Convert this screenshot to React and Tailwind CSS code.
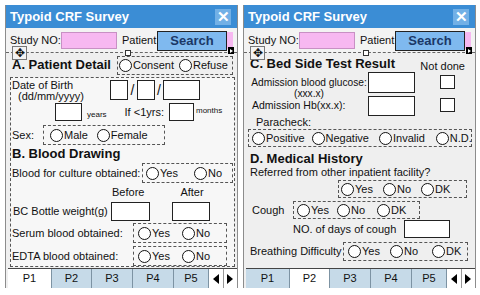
import React from 'react';

const Radio = ({ label, className = '' }) => (
    <span className={`flex items-center ${className}`}>
        <span className="w-[13px] h-[13px] rounded-full border border-[#111] bg-white shrink-0" />
        <span className="ml-[1px]">{label}</span>
    </span>
);

const Group = ({ className = '', children }) => (
    <div className={`flex items-center border border-dashed border-[#555] ${className}`}>{children}</div>
);

const Box = ({ className = '' }) => <div className={`border border-[#222] bg-white shrink-0 ${className}`} />;

const LeftContent = () => (
    <div className="flex flex-col h-full">
        <div className="flex items-center h-[24px]">
            <span className="ml-[6px] text-[13px] font-bold">A. Patient Detail</span>
            <Group className="ml-auto mr-[4px] w-[116px] h-[19px] pl-[1px] gap-[5px]">
                <Radio label="Consent" />
                <Radio label="Refuse" />
            </Group>
        </div>
        <div className="ml-[4px] mr-[2px] mb-[1px] flex-1 border border-dashed border-[#555] bg-[#f7f7f7] flex flex-col">
            <div className="flex mt-[2px] h-[20px]">
                <div className="w-[99px] leading-[11px] pl-[1px]">
                    <div>Date of Birth</div>
                    <div className="pl-[6px]">(dd/mm/yyyy)</div>
                </div>
                <Box className="w-[18px] h-[20px]" />
                <span className="w-[9px] text-center text-[14px] leading-[20px]">/</span>
                <Box className="w-[18px] h-[20px]" />
                <span className="w-[8px] text-center text-[14px] leading-[20px]">/</span>
                <Box className="w-[37px] h-[20px]" />
            </div>
            <div className="flex items-center mt-[3px] h-[18px]">
                <Box className="ml-[44px] w-[27px] h-[18px]" />
                <span className="ml-[5px] text-[8px] mt-[5px]">years</span>
                <span className="ml-[18px]">If &lt;1yrs:</span>
                <Box className="ml-[5px] w-[25px] h-[18px]" />
                <span className="ml-[2px] text-[8px] -mt-[2px]">months</span>
            </div>
            <div className="flex items-center mt-[4px] h-[20px]">
                <span className="ml-[1px] w-[31px]">Sex:</span>
                <Group className="w-[122px] h-[20px] pl-[6px] gap-[9px]">
                    <Radio label="Male" />
                    <Radio label="Female" />
                </Group>
            </div>
            <div className="mt-[1px] ml-[1px] text-[13px] font-bold leading-[16px]">B. Blood Drawing</div>
            <div className="flex items-center mt-[1px] h-[20px]">
                <span className="ml-[1px] w-[130px]">Blood for culture obtained:</span>
                <Group className="w-[91px] h-[20px] pl-[3px] gap-[16px]">
                    <Radio label="Yes" />
                    <Radio label="No" />
                </Group>
            </div>
            <div className="flex mt-[3px] h-[13px] leading-[13px]">
                <span className="ml-[101px]">Before</span>
                <span className="ml-[36px]">After</span>
            </div>
            <div className="flex items-center mt-[2px] h-[20px]">
                <span className="ml-[2px] w-[98px]">BC Bottle weight(g)</span>
                <Box className="w-[39px] h-[19px]" />
                <Box className="ml-[22px] w-[38px] h-[19px]" />
            </div>
            <div className="flex items-center mt-[2px] h-[20px]">
                <span className="ml-[1px] w-[121px]">Serum blood obtained:</span>
                <Group className="w-[94px] h-[20px] pl-[4px] gap-[12px]">
                    <Radio label="Yes" />
                    <Radio label="No" />
                </Group>
            </div>
            <div className="flex items-center mt-[3px] h-[20px]">
                <span className="ml-[1px] w-[121px]">EDTA blood obtained:</span>
                <Group className="w-[94px] h-[20px] pl-[4px] gap-[12px]">
                    <Radio label="Yes" />
                    <Radio label="No" />
                </Group>
            </div>
        </div>
    </div>
);

const RightContent = () => (
    <div className="flex flex-col h-full">
        <div className="flex h-[16px] mt-[3px]">
            <span className="ml-[6px] text-[13px] font-bold leading-[16px]">C. Bed Side Test Result</span>
            <span className="ml-auto mr-[10px] mt-[4px] leading-[12px]">Not done</span>
        </div>
        <div className="flex h-[21px]">
            <div className="ml-[6px] w-[118px] text-center leading-[11px] mt-[5px] text-[10.2px]">
                <div>Admission blood glucose:</div>
                <div>(xxx.x)</div>
            </div>
            <Box className="w-[47px] h-[21px]" />
            <Box className="ml-[25px] mt-[3px] w-[15px] h-[14px]" />
        </div>
        <div className="flex items-center h-[20px] mt-[3px]">
            <span className="ml-[8px] w-[116px] text-[10.5px]">Admission Hb(xx.x):</span>
            <Box className="w-[47px] h-[20px]" />
            <Box className="ml-[25px] -mt-[2px] w-[15px] h-[14px]" />
        </div>
        <div className="ml-[12px] leading-[12px] h-[12px]">Paracheck:</div>
        <Group className="ml-[4px] mr-[3px] mt-[1px] h-[18px] pl-[3px]">
            <Radio label="Positive" />
            <Radio label="Negative" className="ml-[7px]" />
            <Radio label="Invalid" className="ml-[10px]" />
            <Radio label="N.D." className="ml-[11px]" />
        </Group>
        <div className="mt-[4px] ml-[6px] text-[13px] font-bold leading-[15px]">D. Medical History</div>
        <div className="ml-[6px] leading-[13px]">Referred from other inpatient facility?</div>
        <Group className="ml-[94px] w-[129px] h-[18px] mt-[1px] pl-[2px]">
            <Radio label="Yes" />
            <Radio label="No" className="ml-[10px]" />
            <Radio label="DK" className="ml-[10px]" />
        </Group>
        <div className="flex items-center h-[18px] mt-[3px]">
            <span className="ml-[8px] w-[41px]">Cough</span>
            <Group className="w-[127px] h-[18px] pl-[3px]">
                <Radio label="Yes" />
                <Radio label="No" className="ml-[8px]" />
                <Radio label="DK" className="ml-[12px]" />
            </Group>
        </div>
        <div className="flex items-center h-[18px] mt-[1px]">
            <span className="ml-[49px] w-[111px]">NO. of days of cough</span>
            <Box className="w-[46px] h-[18px]" />
        </div>
        <div className="flex items-center h-[19px] mt-[4px]">
            <span className="ml-[6px] w-[93px]">Breathing Difficulty</span>
            <Group className="w-[125px] h-[19px] pl-[4px]">
                <Radio label="Yes" />
                <Radio label="No" className="ml-[10px]" />
                <Radio label="DK" className="ml-[14px]" />
            </Group>
        </div>
    </div>
);

const Panel = ({ active, children }) => {
    const tabs = [
        ['P1', 'w-[44px]'],
        ['P2', 'w-[40px]'],
        ['P3', 'w-[41px]'],
        ['P4', 'w-[41px]'],
        ['P5', 'w-[35px]'],
    ];
    return (
        <div className="relative w-[233px] h-[283px] flex flex-col border-x border-[#8c8c8c] bg-[#efefef]">
            <div className="h-[23px] bg-[#3b8dd5] flex items-center px-[4px] shrink-0">
                <span className="text-white font-bold text-[13px]">Typoid CRF Survey</span>
                <div className="ml-auto mr-[2px] w-[16px] h-[16px] bg-[#72b0e6] flex items-center justify-center text-white font-bold text-[15px] leading-none">✕</div>
            </div>
            <div className="h-[25px] flex items-center border-b border-dashed border-[#666] shrink-0 bg-[#f3f3f3]">
                <span className="ml-[4px] w-[51px]">Study NO:</span>
                <div className="w-[56px] h-[17px] bg-[#f7b8f1] border border-[#c890c4]" />
                <span className="ml-[5px] w-[35px]">Patient</span>
                <div className="flex h-[17px] bg-[#f7b8f1]">
                    <div className="w-[70px] h-[20px] -mt-[1px] bg-[#7fb9ef] border border-[#222] flex items-center justify-center text-[#1b3766] font-bold text-[13px]">Search</div>
                    <div className="w-[6px]" />
                </div>
            </div>
            <div className="absolute left-[6px] top-[41px] w-[15px] h-[14px] border border-[#777] bg-[#f3f3f3] flex items-center justify-center text-[12px] leading-none">✥</div>
            <div className="absolute left-[119px] top-[45px] w-[6px] h-[6px] border border-[#333] bg-white" />
            <div className="absolute right-[3px] top-[42px] w-[6px] h-[7px] bg-black flex items-center justify-center">
                <span className="w-0 h-0 border-y-[2px] border-y-transparent border-l-[3px] border-l-white" />
            </div>
            <div className="flex-1 min-h-0">{children}</div>
            <div className="h-[20px] flex border-t border-[#444] bg-[#c6dae8] shrink-0 ml-[2px]">
                {tabs.map(([t, w]) => (
                    <div
                        key={t}
                        className={`${w} h-full flex items-center justify-center border-r border-[#7d93a3] ${t === active ? 'bg-white' : ''}`}
                    >
                        {t}
                    </div>
                ))}
                <div className="flex-1 flex bg-white">
                    <div className="flex-1 flex items-center justify-center border-r border-[#999]">
                        <span className="w-0 h-0 border-y-[5px] border-y-transparent border-r-[6px] border-r-black" />
                    </div>
                    <div className="flex-1 flex items-center justify-center">
                        <span className="w-0 h-0 border-y-[5px] border-y-transparent border-l-[6px] border-l-black" />
                    </div>
                </div>
            </div>
        </div>
    );
};

export default function App() {
    return (
        <div className="w-[480px] h-[295px] bg-white pt-[5px] pl-[5px] flex gap-[5px] whitespace-nowrap text-[11px] text-[#111] font-['Liberation_Sans',Arial,sans-serif]">
            <Panel active="P1">
                <LeftContent />
            </Panel>
            <Panel active="P2">
                <RightContent />
            </Panel>
        </div>
    );
}
